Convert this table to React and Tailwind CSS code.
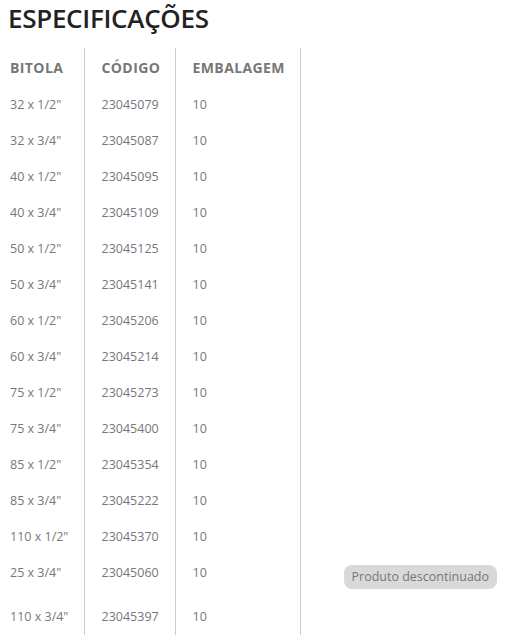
const rows = [
  ['32 x 1/2"', '23045079', '10'],
  ['32 x 3/4"', '23045087', '10'],
  ['40 x 1/2"', '23045095', '10'],
  ['40 x 3/4"', '23045109', '10'],
  ['50 x 1/2"', '23045125', '10'],
  ['50 x 3/4"', '23045141', '10'],
  ['60 x 1/2"', '23045206', '10'],
  ['60 x 3/4"', '23045214', '10'],
  ['75 x 1/2"', '23045273', '10'],
  ['75 x 3/4"', '23045400', '10'],
  ['85 x 1/2"', '23045354', '10'],
  ['85 x 3/4"', '23045222', '10'],
  ['110 x 1/2"', '23045370', '10'],
  ['25 x 3/4"', '23045060', '10', true],
  ['110 x 3/4"', '23045397', '10'],
];

export default function App() {
  return (
    <div className="w-[506px] h-[638px] bg-white overflow-hidden font-['Open_Sans',sans-serif]">
      <h2 className="pl-[8px] pt-[3px] h-[48px] text-[26px] leading-[30px] font-semibold text-[#222] tracking-[-0.3px]">
        ESPECIFICAÇÕES
      </h2>
      <table className="border-collapse text-[12.5px] leading-[16px] text-[#777]">
        <thead>
          <tr className="text-[14px] text-[#777] text-left tracking-[0.4px]">
            <th className="w-[84px] pl-[10px] pt-[10px] pb-[10px] leading-[19px] border-r border-[#ccc] font-bold">BITOLA</th>
            <th className="w-[91px] pl-[17px] pt-[10px] pb-[10px] leading-[19px] border-r border-[#ccc] font-bold">CÓDIGO</th>
            <th className="w-[125px] pl-[17px] pt-[10px] pb-[10px] leading-[19px] border-r border-[#ccc] font-bold">EMBALAGEM</th>
            <th className="w-[206px]"></th>
          </tr>
        </thead>
        <tbody>
          {rows.map(([bitola, codigo, emb, disc]) => (
            <tr key={codigo} className="align-top">
              <td className="pl-[10px] py-[10px] border-r border-[#ccc]">{bitola}</td>
              <td className="pl-[17px] py-[10px] border-r border-[#ccc]">{codigo}</td>
              <td className="pl-[17px] py-[10px] border-r border-[#ccc]">{emb}</td>
              <td className="pl-[43px] py-[10px]">
                {disc && (
                  <span className="inline-block h-[24px] px-[8px] leading-[24px] rounded-[8px] bg-[#d9d9d9] text-[#777] text-[12.5px] whitespace-nowrap">
                    Produto descontinuado
                  </span>
                )}
              </td>
            </tr>
          ))}
        </tbody>
      </table>
    </div>
  );
}
